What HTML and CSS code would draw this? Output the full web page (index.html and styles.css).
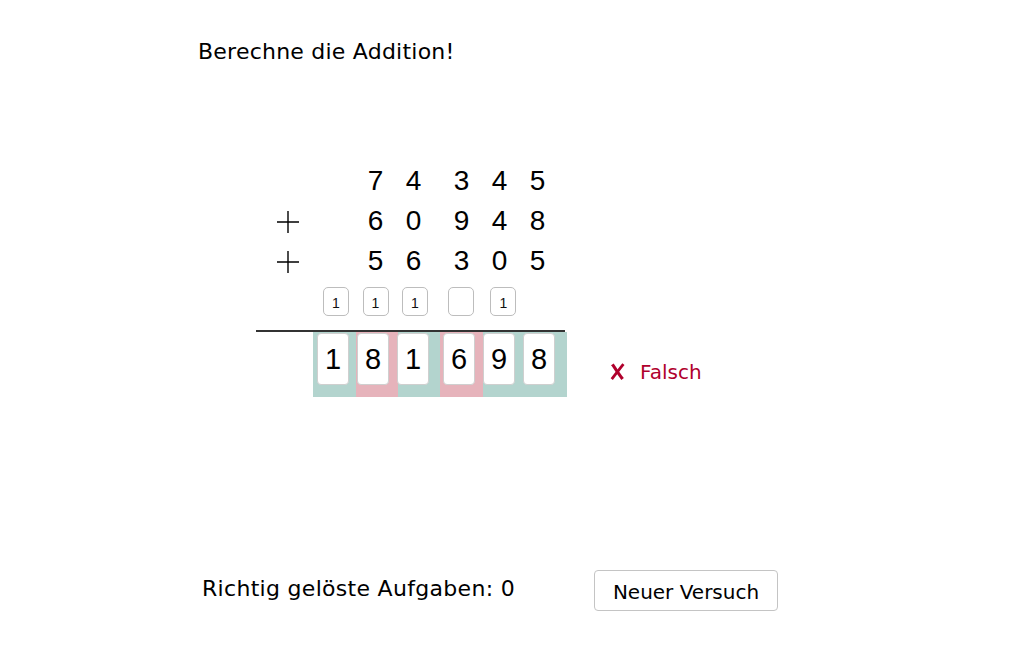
FILE: index.html
```html
<!DOCTYPE html>
<html lang="de">
<head>
<meta charset="utf-8">
<title>Addition</title>
<link rel="stylesheet" href="styles.css">
</head>
<body>
<div class="page">
  <h1 class="title">Berechne die Addition!</h1>

  <div class="problem">
    <div class="row">
      <div class="op"></div>
      <div class="digits">
        <span class="d">7</span><span class="d">4</span><span class="d sep">3</span><span class="d">4</span><span class="d">5</span>
      </div>
    </div>
    <div class="row">
      <div class="op"><svg class="plus" viewBox="0 0 22 22" width="22" height="22"><path d="M0 11H22M11 0V22" stroke="#000" stroke-width="1.4" fill="none"/></svg></div>
      <div class="digits">
        <span class="d">6</span><span class="d">0</span><span class="d sep">9</span><span class="d">4</span><span class="d">8</span>
      </div>
    </div>
    <div class="row">
      <div class="op"><svg class="plus" viewBox="0 0 22 22" width="22" height="22"><path d="M0 11H22M11 0V22" stroke="#000" stroke-width="1.4" fill="none"/></svg></div>
      <div class="digits">
        <span class="d">5</span><span class="d">6</span><span class="d sep">3</span><span class="d">0</span><span class="d">5</span>
      </div>
    </div>

    <div class="carries">
      <span class="carry">1</span><span class="carry">1</span><span class="carry">1</span><span class="carry sep"></span><span class="carry last">1</span>
    </div>

    <div class="rule"></div>

    <div class="result-row">
      <div class="result">
        <div class="bg">
          <span class="cell ok w43"></span><span class="cell bad w42"></span><span class="cell ok w42"></span><span class="cell bad w43"></span><span class="cell ok w84"></span>
        </div>
        <div class="boxes">
          <span class="rbox">1</span><span class="rbox">8</span><span class="rbox">1</span><span class="rbox sep">6</span><span class="rbox">9</span><span class="rbox">8</span>
        </div>
      </div>
      <div class="feedback">
        <span class="cross"><svg viewBox="0 0 14 16" width="15" height="17" aria-label="✗"><path d="M2.2 1.2C5 5.5 8.2 10.5 11.8 15" stroke="#b0002c" stroke-width="3" stroke-linecap="butt" fill="none"/><path d="M12.6 1C9.5 4.8 5.6 10 1.6 15.2" stroke="#b0002c" stroke-width="2.6" stroke-linecap="butt" fill="none"/></svg></span><span>Falsch</span>
      </div>
    </div>
  </div>

  <div class="footer">
    <span class="score">Richtig gelöste Aufgaben: 0</span>
    <button class="retry" type="button">Neuer Versuch</button>
  </div>
</div>
</body>
</html>
```

FILE: styles.css
```css
html, body {
  margin: 0;
  padding: 0;
  background: #fff;
}

body {
  font-family: "DejaVu Sans", sans-serif;
  color: #000;
}

.page {
  width: 1032px;
  height: 645px;
  overflow: hidden;
}

.title {
  margin: 0;
  padding: 39px 0 0 198px;
  font-size: 22px;
  line-height: 26px;
  font-weight: normal;
  letter-spacing: 0.23px;
}

.problem {
  margin: 96px 0 0 256px;
  width: 311px;
}

.row {
  display: flex;
  height: 40px;
}

.op {
  width: 57px;
  flex: none;
  display: flex;
  align-items: center;
  padding-left: 21px;
  box-sizing: border-box;
}

.plus {
  display: block;
  margin-top: 1px;
}

.digits {
  display: flex;
  padding-left: 43.5px;
}

.d {
  width: 38px;
  text-align: center;
  font-family: "Liberation Sans", Arial, sans-serif;
  font-size: 28px;
  line-height: 40px;
}

.d.sep {
  margin-left: 10px;
}

.carries {
  display: flex;
  gap: 13.5px;
  margin-top: 6px;
  padding-left: 67px;
  height: 29px;
}

.carry {
  width: 26px;
  height: 29px;
  box-sizing: border-box;
  border: 1px solid #bdbdbd;
  border-radius: 5px;
  font-family: "Liberation Sans", Arial, sans-serif;
  font-size: 14px;
  line-height: 30px;
  text-align: center;
  color: #111;
  background: #fff;
}

.carry.sep {
  margin-left: 6.3px;
}

.carry.last {
  margin-left: 3.2px;
}

.rule {
  width: 309px;
  height: 2px;
  background: #333;
  margin-top: 14px;
}

.result-row {
  display: flex;
  align-items: flex-start;
}

.result {
  display: grid;
  margin-left: 57px;
}

.bg, .boxes {
  grid-area: 1 / 1;
}

.bg {
  display: flex;
  height: 65px;
}

.cell {
  display: block;
  height: 65px;
}

.ok { background: #b3d4ce; }
.bad { background: #e6b3bb; }
.w42 { width: 42px; }
.w43 { width: 43px; }
.w84 { width: 84px; }

.boxes {
  display: flex;
  gap: 8px;
  padding: 1px 0 0 4px;
  align-items: flex-start;
}

.rbox {
  width: 32px;
  height: 52px;
  box-sizing: border-box;
  border: 1px solid #cfcfcf;
  border-radius: 4px;
  background: #fff;
  font-family: "Liberation Sans", Arial, sans-serif;
  font-size: 29px;
  line-height: 50px;
  text-align: center;
}

.rbox.sep {
  margin-left: 6px;
}

.feedback {
  margin: 28px 0 0 43px;
  display: flex;
  align-items: flex-start;
  color: #b0002c;
  font-size: 20px;
  line-height: 24px;
  white-space: nowrap;
}

.cross {
  width: 30px;
  flex: none;
  padding-top: 3px;
}

.cross svg {
  display: block;
}

.footer {
  display: flex;
  align-items: flex-start;
  margin-top: 173px;
  padding-left: 202px;
}

.score {
  width: 392px;
  flex: none;
  margin-top: 6px;
  font-size: 22px;
  line-height: 26px;
  letter-spacing: 0.3px;
}

.retry {
  width: 184px;
  height: 41px;
  box-sizing: border-box;
  margin: 0;
  padding: 4px 0 0;
  border: 1px solid #c4c4c4;
  border-radius: 4px;
  background: #fff;
  color: #000;
  font-family: "DejaVu Sans", sans-serif;
  font-size: 20px;
  line-height: 35px;
  text-align: center;
}
```
